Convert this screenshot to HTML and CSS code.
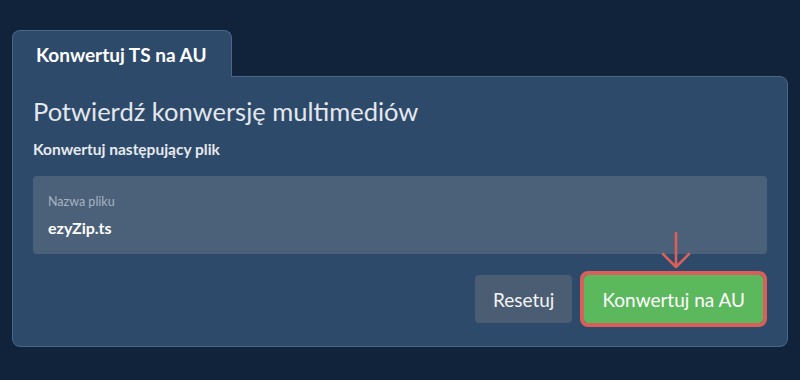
FILE: index.html
```html
<!DOCTYPE html>
<html lang="pl">
<head>
<meta charset="utf-8">
<link rel="stylesheet" href="styles.css">
</head>
<body>
<div class="wrap">
  <div class="tab">Konwertuj TS na AU</div>
  <div class="panel">
    <h1 class="title">Potwierdź konwersję multimediów</h1>
    <p class="subtitle">Konwertuj następujący plik</p>
    <div class="field">
      <div class="field-label">Nazwa pliku</div>
      <div class="field-value">ezyZip.ts</div>
    </div>
    <div class="actions">
      <button class="btn btn-reset">Resetuj</button>
      <div class="convert-wrap">
        <svg class="arrow" width="30" height="37" viewBox="0 0 30 37" aria-hidden="true">
          <path d="M15 1 V35 M2 22 L15 35 L28 22" fill="none" stroke="#d9605a" stroke-width="2.6" stroke-linecap="round" stroke-linejoin="round"/>
        </svg>
        <button class="btn btn-convert">Konwertuj na AU</button>
      </div>
    </div>
  </div>
</div>
</body>
</html>
```
FILE: styles.css
```css
html, body {
  margin: 0;
  padding: 0;
}
body {
  background: #10233a;
  font-family: Lato, "Open Sans", sans-serif;
  color: #e6e9ee;
  width: 800px;
  height: 380px;
  overflow: hidden;
}
.wrap {
  padding: 30px 12px 0 12px;
}
.tab {
  display: inline-block;
  position: relative;
  z-index: 1;
  background: #2d4a6a;
  border: 1px solid #4a6688;
  border-bottom: none;
  border-radius: 8px 8px 0 0;
  padding: 12px 24px 0 23px;
  box-sizing: border-box;
  height: 47px;
  margin-bottom: -1px;
  font-size: 19px;
  font-weight: 700;
  color: #ffffff;
  line-height: 24px;
}
.panel {
  background: #2d4a6a;
  border: 1px solid #4a6688;
  border-radius: 0 8px 8px 8px;
  padding: 17px 20px 23px 20px;
  width: 776px;
  box-sizing: border-box;
}
.title {
  margin: 0;
  font-size: 25.5px;
  font-weight: 400;
  line-height: 34px;
  color: #e4e7ec;
}
.subtitle {
  margin: 11px 0 0 0;
  font-size: 15.5px;
  font-weight: 700;
  line-height: 20px;
  color: #e6e9ee;
}
.field {
  margin-top: 17px;
  background: #4b6079;
  border-radius: 4px;
  height: 78px;
  box-sizing: border-box;
  padding: 18px 15px 0 15px;
}
.field-label {
  font-size: 12.5px;
  line-height: 16px;
  color: #a7b3c1;
}
.field-value {
  margin-top: 8px;
  font-size: 16px;
  font-weight: 700;
  line-height: 20px;
  color: #ffffff;
}
.actions {
  margin-top: 21px;
  display: flex;
  justify-content: flex-end;
  align-items: center;
  gap: 12px;
}
.convert-wrap {
  position: relative;
  display: flex;
}
.arrow {
  position: absolute;
  left: 50%;
  margin-left: -15px;
  top: -43px;
}
.btn {
  font-family: Lato, "Open Sans", sans-serif;
  font-size: 19px;
  height: 48px;
  border: none;
  border-radius: 4px;
  padding: 0 18px;
  color: #f2f4f6;
  cursor: pointer;
}
.btn-reset {
  background: #4b5d73;
}
.btn-convert {
  background: #5cb85c;
  color: #ffffff;
  outline: 4px solid #d9605a;
  outline-offset: 0;
  margin-right: 4px;
}
```
